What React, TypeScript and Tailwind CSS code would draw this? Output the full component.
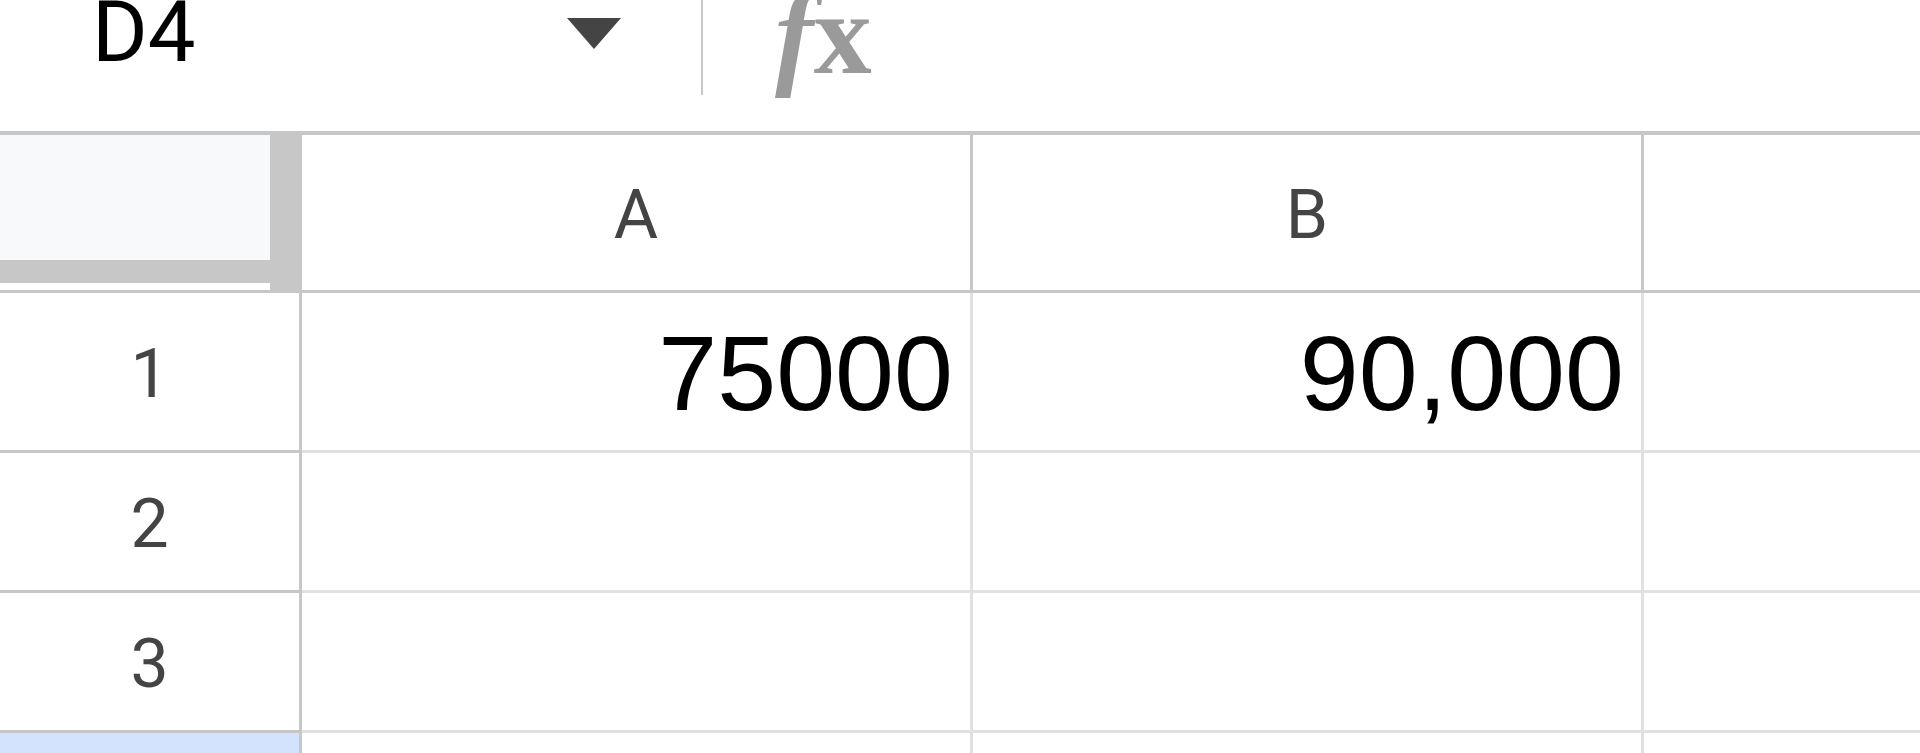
import React from "react";

function HeaderCell({ label, last }: { label: string; last?: boolean }) {
  return (
    <div
      className={
        "flex items-center justify-center pt-[5px] border-b-[3px] border-[#c7c7c7] bg-white text-[68px] leading-none text-[#444] font-['Roboto'] " +
        (last ? "" : "border-r-[3px]")
      }
    >
      {label}
    </div>
  );
}

function RowHeader({ n, selected }: { n?: string; selected?: boolean }) {
  return (
    <div
      className={
        "flex items-center justify-center pt-[5px] border-r-[3px] border-b-[3px] border-[#c7c7c7] text-[68px] leading-none text-[#444] font-['Roboto'] " +
        (selected ? "bg-[#d3e3fd]" : "bg-white")
      }
    >
      {n}
    </div>
  );
}

function Cell({ value, last }: { value?: string; last?: boolean }) {
  return (
    <div
      className={
        "flex items-center justify-end pr-[17px] pt-[2px] border-b-[3px] border-[#e1e1e1] bg-white text-[106px] leading-none text-black font-['Liberation_Sans'] " +
        (last ? "" : "border-r-[3px]")
      }
    >
      {value}
    </div>
  );
}

export default function App() {
  return (
    <div className="w-[1920px] h-[753px] overflow-hidden bg-white flex flex-col">
      {/* Formula bar */}
      <div className="h-[135px] shrink-0 flex items-start border-b-4 border-[#c7c7c7] bg-white">
        <div className="w-[701px] h-full flex items-start">
          <span className="pl-[92px] text-[85px] leading-[64px] text-black font-['Roboto']">
            D4
          </span>
          <svg
            className="ml-auto mr-[80px] mt-[18px]"
            width="54"
            height="31"
            viewBox="0 0 54 31"
          >
            <polygon points="0,0 54,0 27,31" fill="#444" />
          </svg>
        </div>
        <div className="w-[2px] h-[95px] bg-[#c7c7c7]" />
        <div className="ml-[72px] text-[116px] leading-[68px] text-[#9a9a9a] font-['Liberation_Serif'] font-bold whitespace-nowrap">
          <span className="italic">f</span>
          <span>x</span>
        </div>
      </div>

      {/* Grid */}
      <div className="grid grid-cols-[302px_671px_671px_1fr] grid-rows-[158px_160px_140px_140px_60px]">
        {/* corner */}
        <div className="flex border-r-[3px] border-b-[3px] border-[#c7c7c7] bg-white">
          <div className="w-[270px] flex flex-col">
            <div className="h-[125px] bg-[#f8f9fa]" />
            <div className="h-[23px] bg-[#c7c7c7]" />
            <div className="flex-1 bg-white" />
          </div>
          <div className="flex-1 bg-[#c7c7c7]" />
        </div>
        <HeaderCell label="A" />
        <HeaderCell label="B" />
        <HeaderCell label="" last />

        <RowHeader n="1" />
        <Cell value="75000" />
        <Cell value="90,000" />
        <Cell last />

        <RowHeader n="2" />
        <Cell />
        <Cell />
        <Cell last />

        <RowHeader n="3" />
        <Cell />
        <Cell />
        <Cell last />

        <RowHeader n="" selected />
        <Cell />
        <Cell />
        <Cell last />
      </div>
    </div>
  );
}
